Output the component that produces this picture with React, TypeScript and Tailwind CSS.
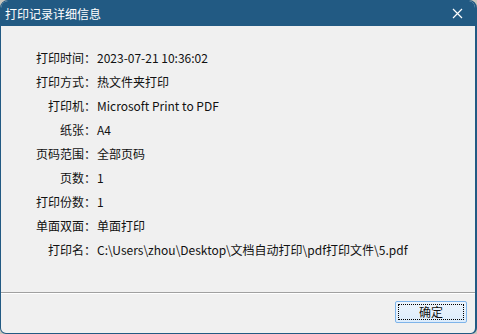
import React from 'react';

const rows: [string, string][] = [
  ['打印时间：', '2023-07-21 10:36:02'],
  ['打印方式：', '热文件夹打印'],
  ['打印机：', 'Microsoft Print to PDF'],
  ['纸张：', 'A4'],
  ['页码范围：', '全部页码'],
  ['页数：', '1'],
  ['打印份数：', '1'],
  ['单面双面：', '单面打印'],
  ['打印名：', 'C:\\Users\\zhou\\Desktop\\文档自动打印\\pdf打印文件\\5.pdf'],
];

const App: React.FC = () => {
  return (
    <div
      className="w-[477px] h-[334px] bg-[#c9c6bd] text-[12px] text-[#111]"
      style={{ fontFamily: '"Noto Sans CJK SC", "Noto Sans", sans-serif' }}
    >
      <div className="w-full h-full flex flex-col rounded-t-[8px] rounded-b-[6px] overflow-hidden border border-r-2 border-[#225a83] bg-[#f0f0f0]">
        {/* title bar */}
        <div className="h-[25px] shrink-0 bg-[#225a83] flex items-center justify-between pl-[4px] pr-[12px] text-white text-[12px]">
          <span className="leading-none">打印记录详细信息</span>
          <svg width="11" height="11" viewBox="0 0 11 11" className="text-white">
            <path d="M1 1 L10 10 M10 1 L1 10" stroke="currentColor" strokeWidth="1.2" />
          </svg>
        </div>

        {/* details */}
        <div className="flex-1 pt-[20px]">
          {rows.map(([label, value]) => (
            <div key={label} className="flex h-[24px] items-center leading-none">
              <span className="w-[95px] text-right shrink-0">{label}</span>
              <span className="pl-[1px] whitespace-nowrap">{value}</span>
            </div>
          ))}
        </div>

        {/* footer */}
        <div className="h-[41px] shrink-0 border-t border-[#a0a0a0] shadow-[inset_0_1px_0_#ffffff] flex items-start justify-end pt-[8px] pr-[8px]">
          <button className="w-[72px] h-[22px] border border-[#7eb4ea] bg-gradient-to-b from-[#ecf4fc] to-[#dcecfc] rounded-[2px] p-[2px]">
            <div className="w-full h-full border border-dotted border-black flex items-center justify-center text-[12px] leading-none">
              确定
            </div>
          </button>
        </div>
      </div>
    </div>
  );
};

export default App;
